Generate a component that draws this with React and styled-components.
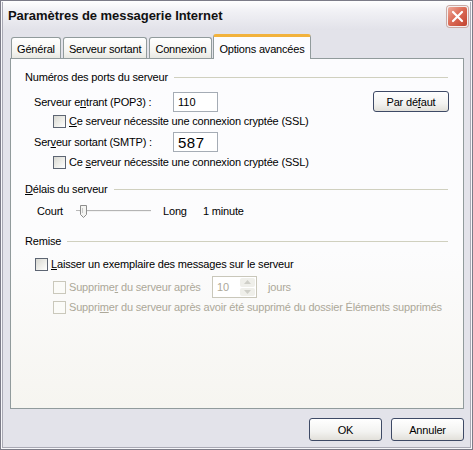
import React from 'react';
import styled, { createGlobalStyle } from 'styled-components';

const GlobalStyle = createGlobalStyle`
  html, body {
    margin: 0;
    padding: 0;
    background: #e3e3ea;
  }
  body {
    font-family: "Liberation Sans", Arial, sans-serif;
    font-size: 11px;
    letter-spacing: -0.18px;
    color: #000;
  }
`;

const Window = styled.div`
  width: 473px;
  height: 450px;
  box-sizing: border-box;
  display: flex;
  flex-direction: column;
  background: #e3e3ea;
  border: 1px solid #7c7c88;
  box-shadow: inset 0 0 0 1px #f7f7fa, inset 0 0 0 2px #a9a9b4;
`;

const TitleBar = styled.div`
  height: 29px;
  margin: 0 2px;
  padding: 0 2px 0 5px;
  display: flex;
  align-items: center;
  justify-content: space-between;
  background: linear-gradient(to bottom, #ffffff 0%, #f1f1f5 35%, #e2e2e9 100%);
`;

const Title = styled.span`
  font-size: 13px;
  font-weight: bold;
  letter-spacing: -0.05px;
  color: #111;
`;

const CloseButton = styled.div`
  width: 21px;
  height: 21px;
  margin-top: 1px;
  box-sizing: border-box;
  border: 1px solid #f4f0f0;
  border-radius: 3px;
  background: linear-gradient(135deg, #eeab9c 0%, #dc6d58 45%, #c2422f 100%);
  display: flex;
  align-items: center;
  justify-content: center;
  box-shadow: 0 0 0 1px #c9a9a4;
`;

const Body = styled.div`
  flex: 1;
  display: flex;
  flex-direction: column;
  padding: 4px 8px 0 9px;
`;

const TabStrip = styled.div`
  display: flex;
  align-items: flex-end;
  height: 24px;
  padding-left: 1px;
  position: relative;
  z-index: 1;
`;

const Tab = styled.div`
  box-sizing: border-box;
  height: ${(p) => (p.$active ? '25px' : '21px')};
  margin-right: 2px;
  margin-left: ${(p) => (p.$active ? '-1px' : '0')};
  margin-bottom: ${(p) => (p.$active ? '-1px' : '0')};
  padding: ${(p) => (p.$active ? '1px 5px 0' : '1px 5px 0')};
  display: flex;
  align-items: center;
  border: 1px solid #919b9c;
  border-bottom: none;
  border-top: ${(p) => (p.$active ? '3px solid #f2b23c' : '1px solid #919b9c')};
  border-radius: 3px 3px 0 0;
  background: ${(p) =>
    p.$active
      ? '#fcfcfe'
      : 'linear-gradient(to bottom, #ffffff 0%, #f4f4f0 70%, #e8e8e2 100%)'};
`;

const Panel = styled.div`
  box-sizing: border-box;
  width: 454px;
  height: 351px;
  border: 1px solid #919b9c;
  background: linear-gradient(to bottom, #fcfcfe 0%, #fcfcfd 55%, #f6f5f0 100%);
  padding: 11px 15px 0 14px;
  display: flex;
  flex-direction: column;
`;

const GroupHeader = styled.div`
  display: flex;
  align-items: center;
  gap: 6px;
  height: 14px;
  margin-top: ${(p) => p.$mt || 0}px;
  &::after {
    content: '';
    flex: 1;
    height: 1px;
    background: #d0d0bf;
  }
`;

const Row = styled.div`
  display: flex;
  align-items: center;
  height: ${(p) => p.$h || 14}px;
  margin-top: ${(p) => p.$mt || 0}px;
  padding-left: ${(p) => p.$indent || 0}px;
  color: ${(p) => (p.$disabled ? '#aca899' : '#000')};
`;

const FieldLabel = styled.span`
  width: ${(p) => p.$w}px;
  flex-shrink: 0;
`;

const TextBox = styled.div`
  box-sizing: border-box;
  width: 45px;
  height: 20px;
  border: 1px solid #a5acb5;
  background: #fff;
  padding-left: 4px;
  display: flex;
  align-items: center;
  font-size: ${(p) => p.$size || 11}px;
  letter-spacing: ${(p) => (p.$size ? '0.5px' : '0')};
`;

const Box = styled.span`
  box-sizing: border-box;
  width: 13px;
  height: 13px;
  margin-right: 3px;
  flex-shrink: 0;
  border: 1px solid ${(p) => (p.$disabled ? '#cac8bb' : '#5d6573')};
  background: ${(p) =>
    p.$disabled ? '#fbfbf8' : 'linear-gradient(135deg, #d8d8d2 0%, #f0f0ec 60%, #ffffff 100%)'};
`;

const PushButton = styled.div`
  box-sizing: border-box;
  width: ${(p) => p.$w}px;
  height: ${(p) => p.$h}px;
  border: 1px solid #3e4a66;
  border-radius: 3px;
  background: linear-gradient(to bottom, #ffffff 0%, #f3f3f1 60%, #e2e0da 100%);
  display: flex;
  align-items: center;
  justify-content: center;
  margin-left: ${(p) => (p.$push ? 'auto' : '0')};
  margin-right: ${(p) => p.$mr || 0}px;
`;

const Spinner = styled.div`
  box-sizing: border-box;
  width: 45px;
  height: 22px;
  border: 1px solid #c9c7ba;
  background: #fff;
  display: flex;
  align-items: stretch;
  color: #aca899;
`;

const SpinValue = styled.span`
  flex: 1;
  padding-left: 4px;
  display: flex;
  align-items: center;
`;

const SpinButtons = styled.span`
  width: 15px;
  margin: 1px;
  display: flex;
  flex-direction: column;
  gap: 1px;
`;

const SpinHalf = styled.span`
  flex: 1;
  background: #efefea;
  border-radius: 2px;
  display: flex;
  align-items: center;
  justify-content: center;
`;

const Gap = styled.span`
  display: inline-block;
  width: ${(p) => p.$w}px;
  flex-shrink: 0;
`;

const Footer = styled.div`
  display: flex;
  justify-content: flex-end;
  gap: 9px;
  margin-top: 9px;
`;

const Check = ({ disabled, children, indent, mt }) => (
  <Row $indent={indent} $mt={mt} $disabled={disabled}>
    <Box $disabled={disabled} />
    <span>{children}</span>
  </Row>
);

const Slider = () => (
  <svg width="80" height="16" viewBox="0 0 80 16">
    <line x1="1" y1="7.5" x2="4" y2="7.5" stroke="#b9b9b9" />
    <line x1="4" y1="7.5" x2="76" y2="7.5" stroke="#b4b4b4" />
    <line x1="4" y1="8.5" x2="76" y2="8.5" stroke="#f2f2f2" />
    <path d="M5.5 2.5 h6 v9 l-3 3 l-3 -3 z" fill="#f4f4f2" stroke="#8d8d8d" />
    <line x1="7.5" y1="5" x2="7.5" y2="10" stroke="#c8c8c8" />
  </svg>
);

export default function App() {
  return (
    <>
      <GlobalStyle />
      <Window>
        <TitleBar>
          <Title>Paramètres de messagerie Internet</Title>
          <CloseButton>
            <svg width="13" height="13" viewBox="0 0 13 13">
              <path d="M2 2 L11 11 M11 2 L2 11" stroke="#fff" strokeWidth="2.2" strokeLinecap="round" />
            </svg>
          </CloseButton>
        </TitleBar>
        <Body>
          <TabStrip>
            <Tab>Général</Tab>
            <Tab>Serveur sortant</Tab>
            <Tab>Connexion</Tab>
            <Tab $active>Options avancées</Tab>
          </TabStrip>
          <Panel>
            <GroupHeader>Numéros des ports du serveur</GroupHeader>
            <Row $h={21} $mt={7} $indent={9}>
              <FieldLabel $w={139}>
                Serveur e<u>n</u>trant (POP3) :
              </FieldLabel>
              <TextBox>110</TextBox>
              <PushButton $w={76} $h={21} $push $mr={-1}>
                Par dé<u>f</u>aut
              </PushButton>
            </Row>
            <Check indent={28} mt={2}>
              <u>C</u>e serveur nécessite une connexion cryptée (SSL)
            </Check>
            <Row $h={20} $mt={4} $indent={9}>
              <FieldLabel $w={139}>
                Ser<u>v</u>eur sortant (SMTP) :
              </FieldLabel>
              <TextBox $size={15}>587</TextBox>
            </Row>
            <Check indent={28} mt={3}>
              Ce <u>s</u>erveur nécessite une connexion cryptée (SSL)
            </Check>

            <GroupHeader $mt={13}>
              <span>
                <u>D</u>élais du serveur
              </span>
            </GroupHeader>
            <Row $h={16} $mt={7} $indent={12}>
              <FieldLabel $w={38}>Court</FieldLabel>
              <Slider />
              <Gap $w={8} />
              <FieldLabel $w={40}>Long</FieldLabel>
              <span>1 minute</span>
            </Row>

            <GroupHeader $mt={15}>Remise</GroupHeader>
            <Check indent={10} mt={9}>
              <u>L</u>aisser un exemplaire des messages sur le serveur
            </Check>
            <Row $h={22} $mt={5} $indent={28} $disabled>
              <Box $disabled />
              <FieldLabel $w={143}>
                Supprime<u>r</u> du serveur après
              </FieldLabel>
              <Spinner>
                <SpinValue>10</SpinValue>
                <SpinButtons>
                  <SpinHalf>
                    <svg width="7" height="4" viewBox="0 0 7 4">
                      <path d="M0 4 L3.5 0 L7 4 Z" fill="#cfcfc8" />
                    </svg>
                  </SpinHalf>
                  <SpinHalf>
                    <svg width="7" height="4" viewBox="0 0 7 4">
                      <path d="M0 0 L3.5 4 L7 0 Z" fill="#cfcfc8" />
                    </svg>
                  </SpinHalf>
                </SpinButtons>
              </Spinner>
              <Gap $w={11} />
              <span>jours</span>
            </Row>
            <Check indent={28} mt={2} disabled>
              Suppri<u>m</u>er du serveur après avoir été supprimé du dossier Éléments supprimés
            </Check>
          </Panel>
          <Footer>
            <PushButton $w={73} $h={23}>OK</PushButton>
            <PushButton $w={73} $h={23}>Annuler</PushButton>
          </Footer>
        </Body>
      </Window>
    </>
  );
}
